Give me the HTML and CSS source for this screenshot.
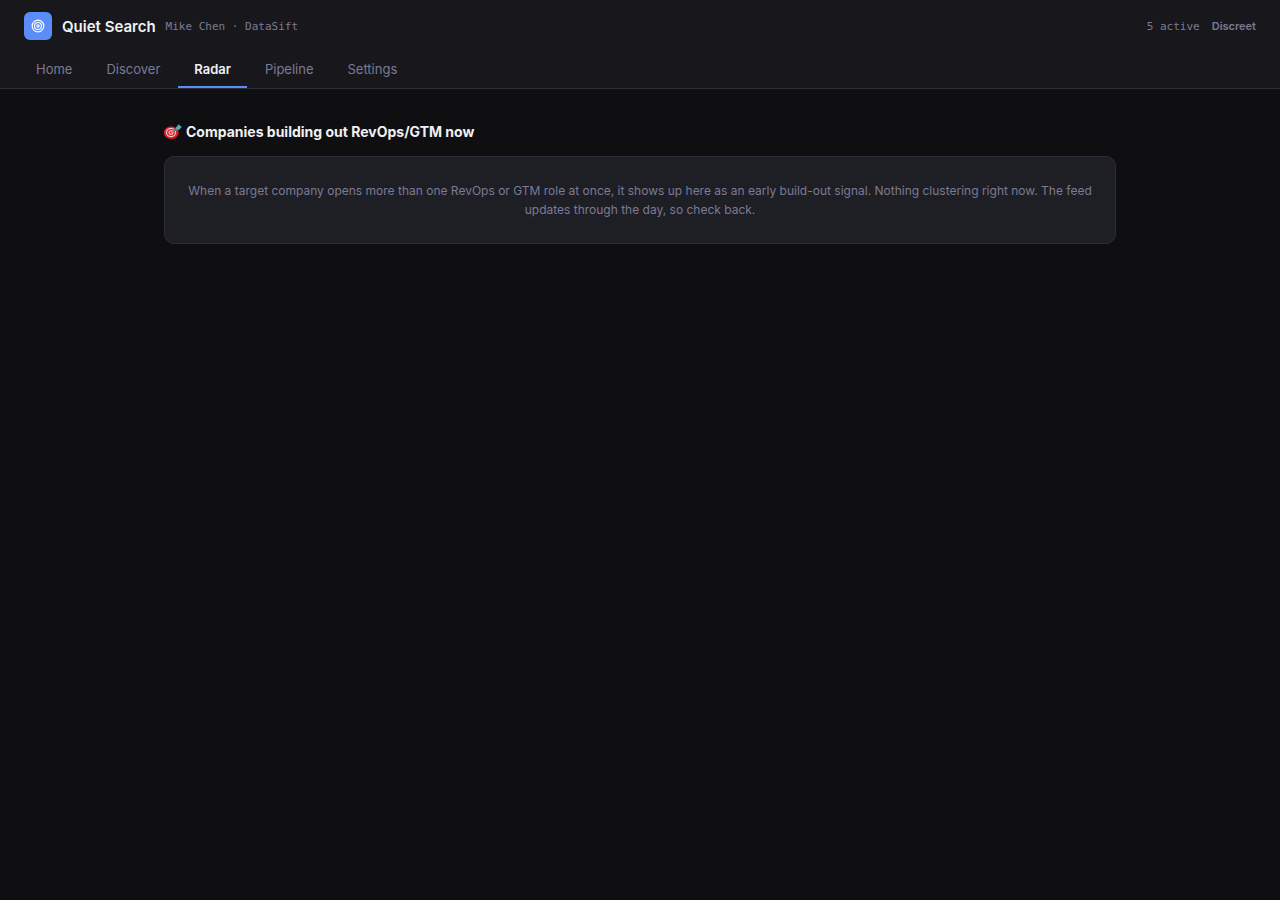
FILE: index.html
```html
<!DOCTYPE html>
<html lang="en">
<head>
  <meta charset="UTF-8">
  <meta name="viewport" content="width=device-width, initial-scale=1.0">
  <title>Quiet Search</title>
  <link rel="stylesheet" href="styles.css">
</head>
<body>
  <header class="header">
    <div class="topbar">
      <div class="brand">
        <div class="logo">
          <svg width="14" height="14" viewBox="0 0 24 24" fill="none" stroke="currentColor" stroke-width="2">
            <circle cx="12" cy="12" r="10"/>
            <circle cx="12" cy="12" r="6"/>
            <circle cx="12" cy="12" r="2"/>
          </svg>
        </div>
        <span class="name">Quiet Search</span>
        <span class="mono">Mike Chen · DataSift</span>
      </div>
      <div class="status">
        <span class="mono">5 active</span>
        <button type="button" class="discreet">Discreet</button>
      </div>
    </div>
    <nav class="tabs">
      <a href="#home" class="tab">Home</a>
      <a href="#discover" class="tab">Discover</a>
      <a href="#radar" class="tab active">Radar</a>
      <a href="#pipeline" class="tab">Pipeline</a>
      <a href="#settings" class="tab">Settings</a>
    </nav>
  </header>
  <main class="content">
    <h2 class="section-title">
      <svg class="dart" width="18" height="16" viewBox="0 0 36 32" aria-hidden="true">
        <ellipse cx="15" cy="18" rx="15" ry="13" fill="#8e1420"/>
        <ellipse cx="14" cy="17" rx="14" ry="12" fill="#e0242e"/>
        <ellipse cx="14" cy="17" rx="10" ry="9" fill="#f3dede"/>
        <ellipse cx="14" cy="17" rx="8" ry="7" fill="#dc2430"/>
        <ellipse cx="14" cy="17" rx="5" ry="4.5" fill="#f3dede"/>
        <ellipse cx="14" cy="17" rx="3" ry="2.5" fill="#dc2430"/>
        <path d="M14 17 22 12" stroke="#c59a45" stroke-width="2.5"/>
        <path d="M20 13 28 8" stroke="#298c97" stroke-width="5"/>
        <path d="m24 7 6-7 2 4 4 1-5 6-6 1z" fill="#45b5bd"/>
      </svg>
      <span>Companies building out RevOps/GTM now</span>
    </h2>
    <div class="empty">When a target company opens more than one RevOps or GTM role at once, it shows up here as an early build-out signal. Nothing clustering right now. The feed updates through the day, so check back.</div>
  </main>
</body>
</html>
```
FILE: styles.css
```css
:root {
  --bg: #0f0f11;
  --surface: #18181c;
  --card: #1e1f24;
  --border: #2e2e38;
  --text: #f0f0f4;
  --muted: #7c7a94;
  --accent: #5b8df8;
}
* {
  box-sizing: border-box;
}
body {
  margin: 0;
  min-height: 100vh;
  background: var(--bg);
  color: var(--text);
  font-family: Inter, "Liberation Sans", sans-serif;
  font-size: 14px;
}
.header {
  background: var(--surface);
  border-bottom: 1px solid var(--border);
}
.topbar {
  display: flex;
  align-items: center;
  justify-content: space-between;
  height: 52px;
  padding: 0 24px;
}
.brand {
  display: flex;
  align-items: center;
  gap: 10px;
}
.logo {
  display: flex;
  align-items: center;
  justify-content: center;
  width: 28px;
  height: 28px;
  border-radius: 6px;
  background: var(--accent);
  color: #fff;
}
.name {
  font-size: 15px;
  font-weight: 600;
}
.mono {
  font-family: "DejaVu Sans Mono", monospace;
  font-size: 11px;
  color: var(--muted);
}
.status {
  display: flex;
  align-items: center;
  gap: 12px;
}
.discreet {
  padding: 0;
  border: 0;
  background: none;
  color: var(--muted);
  font-family: inherit;
  font-size: 11px;
  font-weight: 600;
  cursor: pointer;
}
.tabs {
  display: flex;
  gap: 2px;
  padding: 0 20px;
}
.tab {
  height: 36px;
  padding: 0 16px;
  border-bottom: 2px solid transparent;
  color: var(--muted);
  font-size: 13px;
  line-height: 34px;
  text-decoration: none;
}
.tab.active {
  border-bottom-color: var(--accent);
  color: var(--text);
  font-weight: 600;
}
.content {
  max-width: 1000px;
  margin: 0 auto;
  padding: 32px 24px;
}
.section-title {
  display: flex;
  align-items: center;
  gap: 4px;
  margin: 0 0 13px;
  font-size: 14px;
  font-weight: 700;
  line-height: 22px;
}
.empty {
  padding: 24px 20px;
  border: 1px solid var(--border);
  border-radius: 10px;
  background: var(--card);
  color: var(--muted);
  font-size: 12px;
  line-height: 19px;
  text-align: center;
}
```
